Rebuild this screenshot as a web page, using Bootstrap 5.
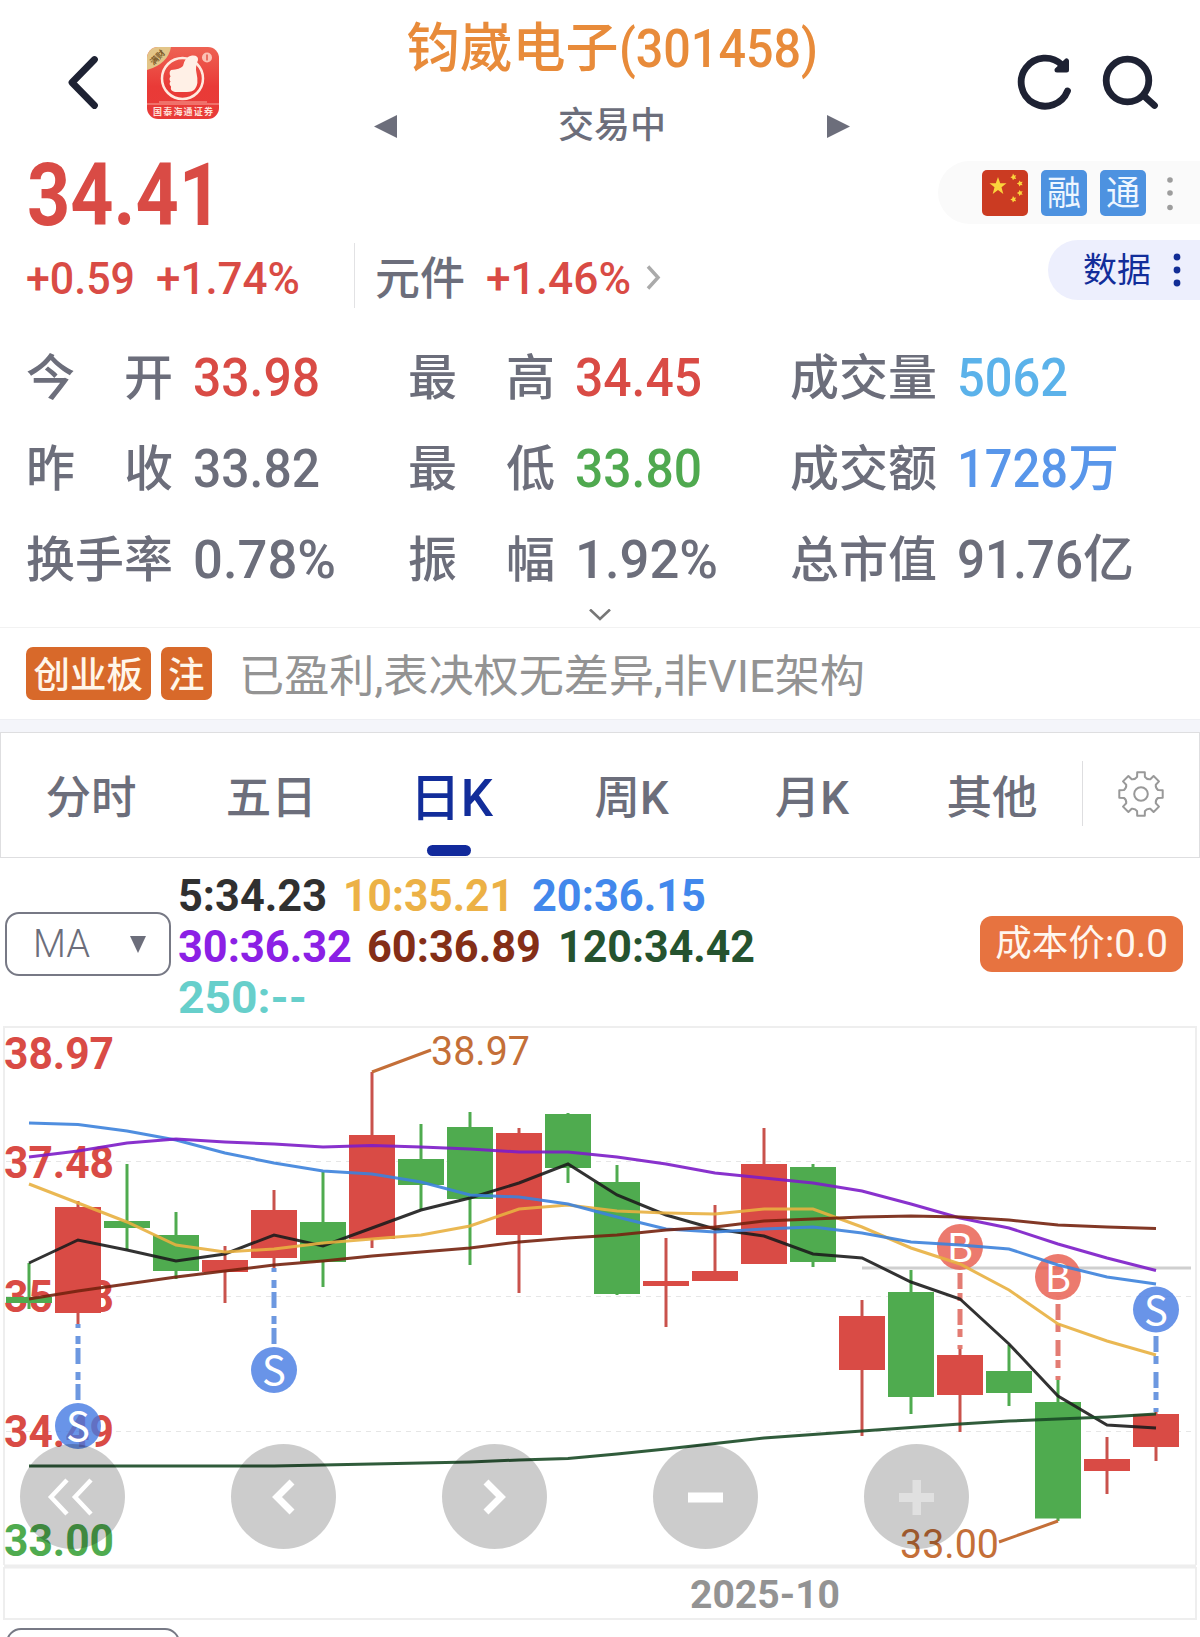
<!DOCTYPE html>
<html lang="zh-CN">
<head>
<meta charset="utf-8">
<meta name="viewport" content="width=device-width, initial-scale=1">
<title>钧崴电子(301458)</title>
<link href="https://cdn.jsdelivr.net/npm/bootstrap@5.3.0/dist/css/bootstrap.min.css" rel="stylesheet">
<style>
:root{--ink:#6c6e7b;--up:#d94b45;--down:#4fa94f;--navy:#122d9a}
body{font-family:Roboto,"Noto Sans CJK SC",sans-serif;color:var(--ink);background:#fff;overflow:hidden}
.screen{width:1200px;height:1637px;overflow:hidden}
svg{display:block;flex:none}
.fit{display:inline-block;white-space:nowrap;transform-origin:0 50%}
.up{color:var(--up)}.down{color:var(--down)}
.topbar{height:152px}
.top-left{width:374px;padding:47px 0 0 66px}
.top-mid{width:476px;padding-top:19px}
.stock-name{font-size:53px;line-height:60px;color:#e88b3a;font-weight:500;margin-bottom:26px}
.stock-name .fit{font-size:54px}
.status{font-size:36px;line-height:42px;font-weight:500}
.top-right{padding:53px 0 0 165px;gap:29px}
.app-icon{margin-left:47px}
.quote{height:180px}
.price{font-size:87px;line-height:86px;font-weight:700;padding-left:27px}
.change{font-size:45px;line-height:60px;padding:11px 0 0 26px;height:71px;font-weight:500}
.chg-pct{margin-left:21px}
.sector{margin:1px 0 0 20px}
.rule{width:1px;height:65px;background:#e2e2e4;margin:-6px 0 0 54px}
.go{margin:16px 0 0 14px}
.pill-a{width:262px;height:63px;margin-top:9px;background:#fafafa;border-radius:32px 0 0 32px;padding-left:44px;gap:13px}
.pill-b{width:152px;height:60px;margin-top:16px;background:#edeffd;border-radius:30px 0 0 30px;color:var(--navy);font-size:34px;padding-left:35px;gap:22px}
.sq{width:46px;height:46px;border-radius:5px;background:#4d92e0;color:#eef6ff;font-size:34px;line-height:47px}
.metrics{padding-left:26px;font-weight:500}
.metric{height:91px;line-height:91px;width:382px}
.lbl{width:147px;font-size:49px;margin-right:20px}
.lbl i,.lbl{padding-top:1px}
.lbl i{padding:0}
.val{font-size:54px}
.unit{font-size:51px}
.amount{color:#5896ea}
.volume{color:#5bb2ea}
.amount .lbl{color:var(--ink)}
.more{height:23px;padding-top:4px;border-bottom:1px solid #f2f2f2}
.notes{height:91px;padding-left:26px}
.tagbox{height:53px;border-radius:7px;background:#d8692a;color:#fff6ea;font-size:36.5px;font-weight:500;line-height:57px;padding:0 7.5px}
.tagbox + .tagbox{margin-left:10px}
.note-text{font-size:44.8px;color:#939393;margin-left:27px;padding-top:7px}
.band{height:13px;background:#f4f5fa;border-top:1px solid #eeeff3}
.tabs{height:126px;border:1px solid #dedee0}
.tab-item{width:180.4px;font-size:45.5px;font-weight:500;line-height:132px;height:124px;position:relative;text-align:center}
.tab-item.on{color:var(--navy);font-size:51px}
.tab-item.on::after{content:"";position:absolute;left:66px;bottom:1px;width:44px;height:11px;border-radius:6px;background:#122a9c}
.gearbox{border-left:1px solid #dedee0;height:65px;width:117px;margin-top:28px}
.legend-row{height:166px}
.pick{width:166px;height:64px;margin:54px 0 0 5px;border:2px solid #777985;border-radius:14px;font-size:38px;font-weight:300;padding:0 23px 0 26px}
.ma{font-size:43.5px;font-weight:700;line-height:51px;padding:13px 0 0 7px;width:780px}
.cost{width:203px;height:56px;margin:58px 17px 0 auto;border-radius:12px;background:#e77340;color:#fff6ee;font-size:36.5px}
.cost .fit{font-size:39px}
.chart{position:relative;height:613px}
.chart text{font-family:Roboto,sans-serif}
.chart .flag{font-family:"Noto Sans CJK SC",sans-serif}
.ctl{position:absolute;left:20px;top:420px;gap:106px}
.ctl-btn{width:105px;height:105px;border:0;padding:0;border-radius:50%;background:rgba(0,0,0,.2)}
</style>
</head>
<body>
<main class="screen">
  <header class="topbar d-flex">
    <div class="top-left d-flex align-items-start">
      <svg width="34" height="72" viewBox="0 0 34 72"><path d="M28.500 12.500L6 35.500L28.500 58.500" fill="none" stroke="#1e2233" stroke-width="6.800" stroke-linecap="round" stroke-linejoin="round"/></svg>
      <svg class="app-icon" width="72" height="72" viewBox="0 0 72 72">
        <defs><linearGradient id="red" x2="0" y2="1"><stop stop-color="#ee6253"/><stop offset=".55" stop-color="#e93a37"/><stop offset="1" stop-color="#e83b39"/></linearGradient><clipPath id="rc"><rect width="72" height="72" rx="11"/></clipPath></defs>
        <g clip-path="url(#rc)"><rect width="72" height="72" fill="url(#red)"/>
        <path d="M0 0H24Q21 17 0 23Z" fill="#e3c588"/>
        <circle cx="35.500" cy="31.500" r="20.500" fill="none" stroke="#ffe9df" stroke-width="2.500"/>
        <path d="M24 23Q33 22.500 36 19Q38 9.500 45 8.500Q51.500 8 51 13Q48 20 49.500 26Q52 37 48 42Q45.500 45.500 38 45H28Q23 44 24 39.500Q21.500 37 23.500 34.500Q21.500 32 23.500 29.500Q21.500 25 24 23Z" fill="#fff0e6"/>
        <circle cx="60" cy="10.500" r="5" fill="#fbc1b5"/><path d="M60 7.500V13.500" stroke="#e85a4e" stroke-width="1.600"/>
        <path d="M0 57H72M12 55H60" stroke="#f7a79c" stroke-width="1"/></g>
        <text transform="translate(6.500 18.500) rotate(-44)" font-size="8.500" font-weight="700" fill="#7c5a2a">满财</text>
        <text x="6" y="67.500" font-size="9" font-weight="700" fill="#ffe1da" textLength="60">国泰海通证券</text>
      </svg>
    </div>
    <div class="top-mid">
      <div class="stock-name text-center text-nowrap">钧崴电子<span class="fit" data-fit="199">(301458)</span></div>
      <div class="status d-flex justify-content-between align-items-center">
        <svg width="23" height="23" viewBox="0 0 23 23"><path d="M0 11.500L23 0V23Z" fill="#6c6e7b"/></svg>
        <span>交易中</span>
        <svg width="23" height="23" viewBox="0 0 23 23"><path d="M23 11.500L0 0V23Z" fill="#6c6e7b"/></svg>
      </div>
    </div>
    <div class="top-right d-flex align-items-start">
      <svg width="58" height="60" viewBox="0 0 58 60" fill="none" stroke="#1e2233" stroke-width="6.800" stroke-linecap="round"><path d="M47 12A24 24 0 1 0 52.500 38"/><path d="M51.500 8V17H42Z" fill="#1e2233" stroke-width="5" stroke-linejoin="round"/></svg>
      <svg width="58" height="60" viewBox="0 0 58 60" fill="none" stroke="#1e2233" stroke-width="6.800" stroke-linecap="round"><circle cx="25.500" cy="27.500" r="21.300"/><path d="M42 43L52.500 52.500"/></svg>
    </div>
  </header>

  <section class="quote d-flex justify-content-between">
    <div>
      <div class="price up"><span class="fit" data-fit="195">34.41</span></div>
      <div class="change d-flex">
        <span class="fit up" data-fit="109">+0.59</span>
        <span class="fit up chg-pct" data-fit="144">+1.74%</span>
        <span class="rule"></span>
        <span class="sector">元件</span>
        <span class="fit up chg-pct" data-fit="145">+1.46%</span>
        <svg class="go" width="18" height="25" viewBox="0 0 18 25"><path d="M3 1.500L13 12.500L3 23.500" fill="none" stroke="#aaa" stroke-width="3.500"/></svg>
      </div>
    </div>
    <div class="d-flex flex-column align-items-end">
      <div class="pill-a d-flex align-items-center">
        <svg width="46" height="46" viewBox="0 0 46 46"><rect width="46" height="46" rx="5" fill="#cb3b22"/><path fill="#fbd43c" d="M16 7L18.200 13.200L24.500 13.300L19.500 17.300L21.300 24L16 20L10.700 24L12.500 17.300L7.500 13.300L13.800 13.200ZM31 3.500l1.200 2 2-.3-1 1.900 1 1.800-2-.2-1.200 1.600-.8-2-1.800-1 1.800-1zM37.500 10.500l1.200 1.400 2-.2-1.100 1.700 1.100 1.900-2-.3-1.300 1.600-.7-2-1.900-1 1.900-1.100zM37.500 20l1.200 1.400 2-.2-1.100 1.700 1.100 1.900-2-.3-1.300 1.600-.7-2-1.900-1 1.900-1.100zM31 26l1.200 1.700 2-.2-1.100 1.800 1.100 1.900-2-.3-1.300 1.700-.7-2.100-1.900-1 1.900-1.100z"/></svg>
        <span class="sq text-center">融</span><span class="sq text-center">通</span>
        <svg width="24" height="40" viewBox="0 0 24 40" fill="#9d9d9d"><circle cx="11" cy="7" r="2.800"/><circle cx="11" cy="20" r="2.800"/><circle cx="11" cy="34.500" r="2.800"/></svg>
      </div>
      <div class="pill-b d-flex align-items-center"><span>数据</span>
        <svg width="8" height="34" viewBox="0 0 8 34" fill="#122d96"><circle cx="4" cy="4" r="3.400"/><circle cx="4" cy="17" r="3.400"/><circle cx="4" cy="30" r="3.400"/></svg>
      </div>
    </div>
  </section>

  <section class="metrics d-flex flex-wrap">
    <div class="metric d-flex"><span class="lbl d-flex justify-content-between"><i class="fst-normal">今</i><i class="fst-normal">开</i></span><span class="val fit up" data-fit="127">33.98</span></div>
    <div class="metric d-flex"><span class="lbl d-flex justify-content-between"><i class="fst-normal">最</i><i class="fst-normal">高</i></span><span class="val fit up" data-fit="127">34.45</span></div>
    <div class="metric d-flex"><span class="lbl">成交量</span><span class="val fit volume" data-fit="111">5062</span></div>
    <div class="metric d-flex"><span class="lbl d-flex justify-content-between"><i class="fst-normal">昨</i><i class="fst-normal">收</i></span><span class="val fit" data-fit="127">33.82</span></div>
    <div class="metric d-flex"><span class="lbl d-flex justify-content-between"><i class="fst-normal">最</i><i class="fst-normal">低</i></span><span class="val fit down" data-fit="127">33.80</span></div>
    <div class="metric d-flex amount"><span class="lbl">成交额</span><span class="val fit" data-fit="111">1728</span><span class="unit">万</span></div>
    <div class="metric d-flex"><span class="lbl">换手率</span><span class="val fit" data-fit="143">0.78%</span></div>
    <div class="metric d-flex"><span class="lbl d-flex justify-content-between"><i class="fst-normal">振</i><i class="fst-normal">幅</i></span><span class="val fit" data-fit="143">1.92%</span></div>
    <div class="metric d-flex"><span class="lbl">总市值</span><span class="val fit" data-fit="126">91.76</span><span class="unit">亿</span></div>
  </section>
  <div class="more d-flex justify-content-center"><svg width="24" height="14" viewBox="0 0 24 14"><path d="M2 .5L12 10L22 .5" fill="none" stroke="#777" stroke-width="2.600"/></svg></div>

  <section class="notes d-flex align-items-center">
    <span class="tagbox">创业板</span><span class="tagbox">注</span>
    <span class="note-text fit" data-fit="626">已盈利,表决权无差异,非VIE架构</span>
  </section>
  <div class="band"></div>

  <nav class="tabs d-flex">
    <span class="tab-item">分时</span><span class="tab-item">五日</span><span class="tab-item on">日K</span><span class="tab-item">周K</span><span class="tab-item">月K</span><span class="tab-item">其他</span>
    <span class="gearbox d-flex align-items-center justify-content-center">
      <svg width="50" height="56" viewBox="-25 -28 50 56" fill="none" stroke="#999" stroke-width="2"><circle r="6.800"/><path id="gear" stroke-linejoin="round"/></svg>
    </span>
  </nav>

  <section class="legend-row d-flex">
    <div class="pick d-flex align-items-center justify-content-between"><span>MA</span><svg width="16" height="17" viewBox="0 0 16 17"><path d="M0 0H16L8 17Z" fill="#6c6e7b"/></svg></div>
    <div class="ma">
      <div class="d-flex"><span class="fit" data-fit="149" style="color:#303030">5:34.23</span><span class="fit" data-fit="171" style="color:#ecb146;margin-left:16px">10:35.21</span><span class="fit" data-fit="174" style="color:#4288ec;margin-left:18px">20:36.15</span></div>
      <div class="d-flex"><span class="fit" data-fit="174" style="color:#8b20e5">30:36.32</span><span class="fit" data-fit="174" style="color:#842e17;margin-left:15px">60:36.89</span><span class="fit" data-fit="197" style="color:#25532f;margin-left:17px">120:34.42</span></div>
      <div><span class="fit" data-fit="129" style="color:#67cfcb">250:--</span></div>
    </div>
    <div class="cost d-flex align-items-center justify-content-center">成本价<span class="fit" data-fit="63">:0.0</span></div>
  </section>

  <section class="chart">
    <svg id="kline" width="1200" height="613" viewBox="0 1024 1200 613"></svg>
    <div class="ctl d-flex">
      <button class="ctl-btn" aria-label="最左"><svg width="105" height="105" viewBox="0 0 105 105" fill="none" stroke="#fff" stroke-width="4.500"><path d="M47 36L31 53L47 70M71 36L55 53L71 70"/></svg></button>
      <button class="ctl-btn" aria-label="左移"><svg width="105" height="105" viewBox="0 0 105 105" fill="none" stroke="#fff" stroke-width="7"><path d="M61 38L46 53L61 68"/></svg></button>
      <button class="ctl-btn" aria-label="右移"><svg width="105" height="105" viewBox="0 0 105 105" fill="none" stroke="#fff" stroke-width="7"><path d="M44 38L59 53L44 68"/></svg></button>
      <button class="ctl-btn" aria-label="缩小"><svg width="105" height="105" viewBox="0 0 105 105"><path d="M35 48.500H70V58.500H35Z" fill="#fff"/></svg></button>
      <button class="ctl-btn" aria-label="放大"><svg width="105" height="105" viewBox="0 0 105 105"><path d="M35 49H48.500V36H57V49H70V58H57V71H48.500V58H35Z" fill="#e0e0e0"/></svg></button>
    </div>
  </section>
</main>
<script src="https://cdn.jsdelivr.net/npm/bootstrap@5.3.0/dist/js/bootstrap.bundle.min.js"></script>
<script>
// Condense figures to their column widths
document.querySelectorAll('[data-fit]').forEach(function(e){
  var w=+e.dataset.fit,r=document.createRange();r.selectNodeContents(e);
  var n=r.getBoundingClientRect().width;
  e.style.width=w+'px';e.style.flex='none';e.style.transform='scaleX('+(w/n)+')';
});
// Eight-toothed gear outline
(function(){
  var d='',P=function(r,a){a=a*Math.PI/180;return (r*Math.cos(a)).toFixed(1)+' '+(r*Math.sin(a)).toFixed(1)};
  for(var i=0;i<8;i++){var a=i*45-90;d+=(i?'L':'M')+P(17.500,a-13)+'L'+P(22,a-10)+'L'+P(22,a+10)+'L'+P(17.500,a+13)+'Q'+P(15.500,a+22.5)+' '+P(17.500,a+32)}
  document.getElementById('gear').setAttribute('d',d+'Z');
})();
// Candles: up flag, body top, body bottom, high, low
var C=[[0,1297,1303,1263,1309],[1,1207,1313,1201,1324],[0,1221,1228,1164,1250],[0,1235,1271,1212,1279],[1,1260,1272,1246,1303],[1,1210,1258,1190,1268],[0,1222,1262,1172,1287],[1,1135,1239,1072,1248],[0,1159,1185,1124,1210],[0,1127,1199,1112,1265],[1,1133,1235,1128,1293],[0,1114,1168,1113,1183],[0,1182,1294,1165,1295],[1,1281,1286,1238,1327],[1,1271,1281,1205,1281],[1,1164,1264,1128,1264],[0,1167,1262,1164,1267],[1,1316,1370,1300,1436],[0,1292,1397,1270,1414],[1,1355,1395,1349,1432],[0,1371,1393,1345,1406],[0,1402,1518.5,1379,1521],[1,1459,1471,1437,1494],[1,1414,1447,1412,1461]];
var M={'#1c1c1c':[1263,1240,1250,1261,1254,1235,1246,1228,1210,1198,1183,1164,1195,1215,1229,1236,1254,1258,1282,1299,1344,1396,1425,1428],
'#e8b040':[1184,1203,1222,1245,1252,1249,1243,1239,1235,1226,1209,1205,1211,1213,1214,1209,1209,1227,1248,1264,1290,1324,1341,1355],
'#3c82dc':[1123,1124.500,1131,1140,1153,1163,1171,1174,1182,1195,1197,1204,1217,1229,1232,1229,1227,1233,1242,1245,1249,1265,1277,1284],
'#7c1cc8':[1157,1151,1143,1139,1142,1144,1147,1145.500,1147,1149,1152,1152,1157,1164,1173,1178,1183,1191,1204,1218,1228,1244,1258,1270.500],
'#74220e':[1299,1291,1284,1277,1271,1265,1261,1256,1252,1248,1242,1238,1235,1230,1227,1221,1219,1217,1216,1217,1220,1225,1227,1228.500],
'#1a4a26':[1466,1466,1466,1466,1466,1466,1465,1464,1463,1462,1460,1458.500,1454,1449,1443.500,1438,1434.500,1431,1427.500,1424,1421,1419,1417,1414]};
var s='',X=function(i){return 29+49*i},R='#d94b45',G='#4fab4f';
s+='<g fill="none" stroke="#eee" stroke-width="2"><path d="M4 1565V1027H1196V1565"/><path d="M4 1565.500H1196M4 1567.500H1196M4 1567V1619H1196V1567"/></g>';
[1161.5,1296.5,1431.5].forEach(function(y){s+='<path d="M6 '+y+'H1191" stroke="#e6e6e6" stroke-dasharray="5 5"/>'});
[['38.97',1069,R],['37.48',1177.5,R],['35.98',1312,R],['34.49',1447,R],['33.00',1556,G]].forEach(function(t){s+='<text x="4" y="'+t[1]+'" font-size="43.500" font-weight="700" textLength="110" lengthAdjust="spacingAndGlyphs" fill="'+t[2]+'">'+t[0]+'</text>'});
C.forEach(function(c,i){var k=c[0]?R:G,x=X(i);s+='<path d="M'+x+' '+c[3]+'V'+c[4]+'" stroke="'+(c[0]?'#c9524c':k)+'" stroke-width="3"/><rect x="'+(x-23)+'" y="'+c[1]+'" width="46" height="'+(c[2]-c[1])+'" fill="'+k+'"/>'});
s+='<path d="M862 1268H1191" stroke="#cfcfcf" stroke-width="3"/>';
[[1,'S',1426,1400,1324],[5,'S',1370,1344,1268],[23,'S',1309.5,1336,1412],[19,'B',1247,1273,1349],[21,'B',1277,1304,1380]].forEach(function(m){
  var x=X(m[0]),S=m[1]=='S';
  s+='<path d="M'+x+' '+m[3]+'V'+m[4]+'" stroke="'+(S?'#6d98e0':'#e37c73')+'" stroke-width="5" stroke-dasharray="16 4 8 8"/><circle cx="'+x+'" cy="'+m[2]+'" r="23" fill="'+(S?'#4479e2':'#e7594a')+'" opacity=".8"/><text class="flag" x="'+x+'" y="'+(m[2]+15)+'" text-anchor="middle" font-size="40" fill="#fff">'+m[1]+'</text>'});
Object.keys(M).forEach(function(k){s+='<polyline points="'+M[k].map(function(y,i){return X(i)+','+y}).join(' ')+'" fill="none" stroke="'+k+'" stroke-width="3" opacity=".9"/>'});
s+='<g fill="none" stroke="#c46f38" stroke-width="3"><path d="M372 1072L431 1050M1058 1521L999 1542"/></g>';
[['38.97',431,1065],['33.00',900,1558]].forEach(function(t){s+='<text x="'+t[1]+'" y="'+t[2]+'" font-size="41.500" textLength="99" lengthAdjust="spacingAndGlyphs" fill="#c46f38">'+t[0]+'</text>'});
s+='<text x="690" y="1608" font-size="39" font-weight="700" textLength="150" lengthAdjust="spacingAndGlyphs" fill="#939393">2025-10</text>';
s+='<rect x="7" y="1629" width="172" height="66" rx="14" fill="none" stroke="#777985" stroke-width="2"/>';
document.getElementById('kline').innerHTML=s;
</script>
</body>
</html>
